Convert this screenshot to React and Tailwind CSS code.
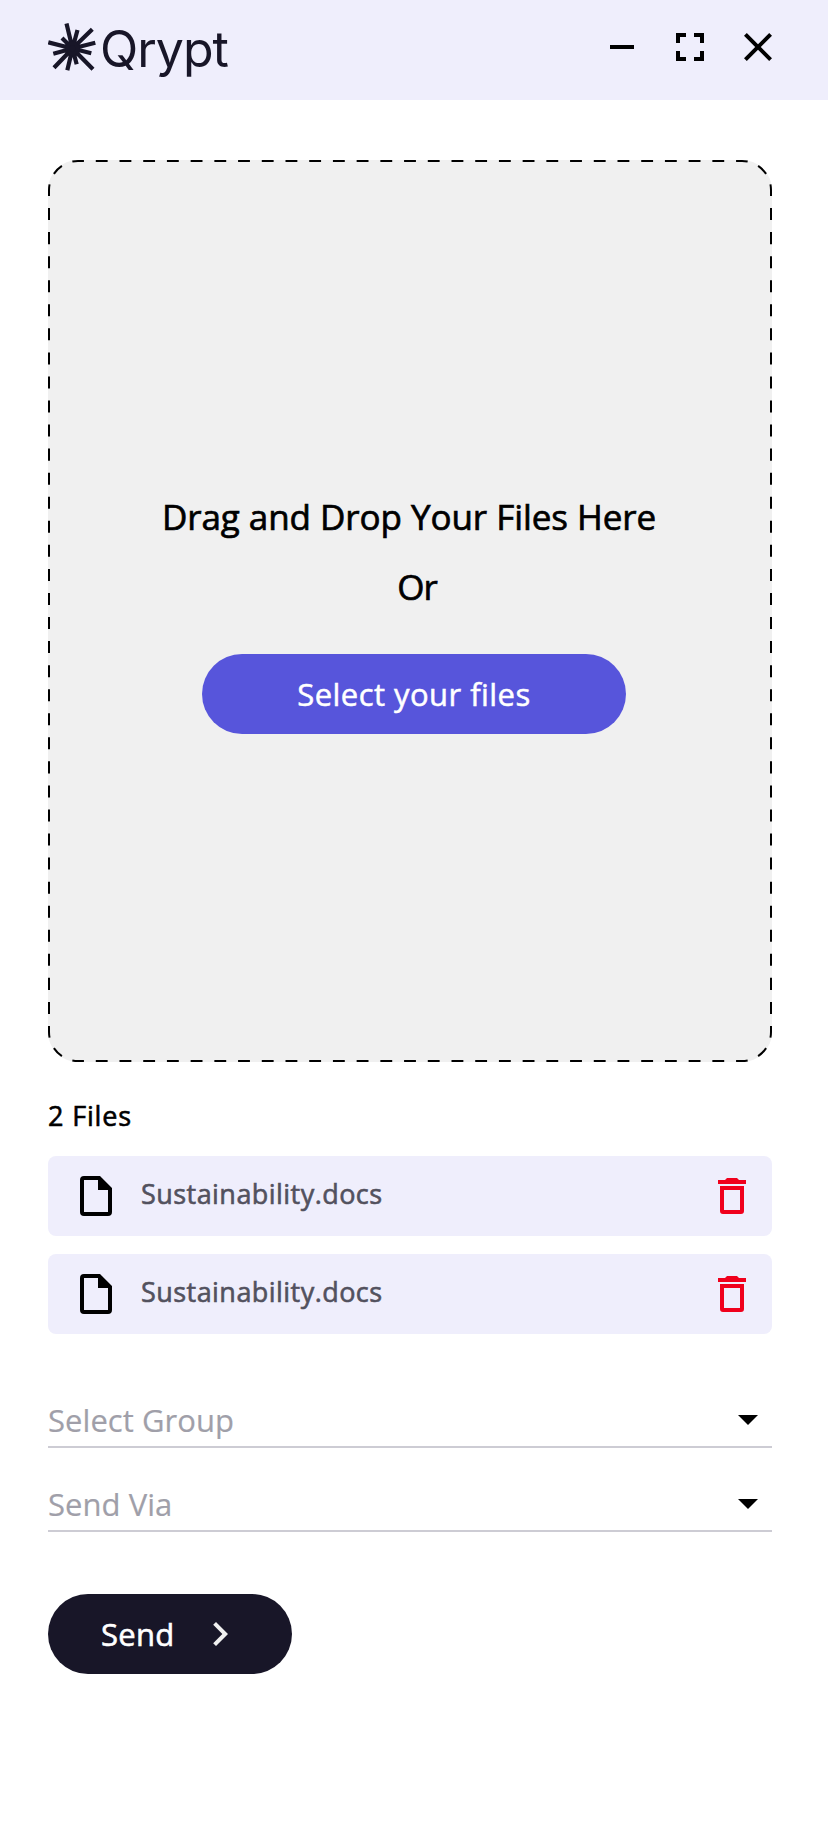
import { useState } from 'react'

function Logo() {
  return (
    <div className="flex items-start text-[#181628]">
      <svg className="h-[50px] w-[48px]" viewBox="0 0 48 50" stroke="currentColor" strokeWidth="4.2">
        <path d="M24.5 25.5 18.5 .5M24.5 25.5 29.5 7M24.5 25.5 44.3 6.3M24.5 25.5 47.3 19.7M24.5 25.5 43.3 30.3M24.5 25.5 45 46.3M24.5 25.5 28.7 41.3M24.5 25.5 19.3 47.3M24.5 25.5 6 44.7M24.5 25.5 5.3 30.7M24.5 25.5 .3 19.3M24.5 25.5 14 15" />
        <circle cx="24.5" cy="25.5" r="5" fill="currentColor" />
      </svg>
      <span className="mt-px ml-[4px] font-['Inter'] text-[50px] leading-[50px] tracking-[-1px]">Qrypt</span>
    </div>
  )
}

function WindowControls() {
  return (
    <div className="flex items-center gap-5">
      <button type="button" aria-label="Minimize">
        <svg className="size-12" viewBox="0 0 24 24">
          <path d="M6 11h12v2H6z" />
        </svg>
      </button>
      <button type="button" aria-label="Fullscreen">
        <svg className="size-12" viewBox="0 0 24 24">
          <path d="M7 14H5v5h5v-2H7v-3zm-2-4h2V7h3V5H5v5zm12 7h-3v2h5v-5h-2v3zM14 5v2h3v3h2V5h-5z" />
        </svg>
      </button>
      <button type="button" aria-label="Close">
        <svg className="size-12" viewBox="0 0 24 24">
          <path d="M19 6.41 17.59 5 12 10.59 6.41 5 5 6.41 10.59 12 5 17.59 6.41 19 12 13.41 17.59 19 19 17.59 13.41 12z" />
        </svg>
      </button>
    </div>
  )
}

// Each side and corner carries a whole number of dash periods, so dashes meet evenly.
function DashedOutline() {
  const sides = [
    { d: 'M30 1H694', length: 672 },
    { d: 'M694 1A29 29 0 0 1 723 30', length: 48 },
    { d: 'M723 30V872', length: 840 },
    { d: 'M723 872A29 29 0 0 1 694 901', length: 48 },
    { d: 'M694 901H30', length: 672 },
    { d: 'M30 901A29 29 0 0 1 1 872', length: 48 },
    { d: 'M1 872V30', length: 840 },
    { d: 'M1 30A29 29 0 0 1 30 1', length: 48 },
  ]
  return (
    <svg className="pointer-events-none absolute inset-0" width="724" height="902" fill="none" stroke="#000" strokeWidth="2">
      {sides.map((s) => (
        <path key={s.d} d={s.d} pathLength={s.length} strokeDasharray="12 12" strokeDashoffset="6" />
      ))}
    </svg>
  )
}

function DropZone() {
  return (
    <section className="relative flex h-[902px] flex-col items-center rounded-[30px] bg-[#f0f0f0] pt-[335px]">
      <DashedOutline />
      <p className="mr-[2px] text-[35px] leading-[44px] tracking-[-0.06px] whitespace-nowrap [-webkit-text-stroke:0.7px]">
        Drag and Drop Your Files Here
      </p>
      <p className="mt-[26px] ml-[14px] text-[35px] leading-[44px] tracking-[-1px] [-webkit-text-stroke:0.7px]">Or</p>
      <button
        type="button"
        className="mt-[45px] ml-2 h-20 w-[424px] rounded-full bg-[#5755db] text-[31px] tracking-[0.45px] text-white [-webkit-text-stroke:0.5px]"
      >
        Select your files
      </button>
    </section>
  )
}

function FileRow({ name, onRemove }) {
  return (
    <li className="flex h-20 items-center rounded-lg bg-[#efeefc] pr-[26px] pl-8">
      <svg className="h-10 w-8" viewBox="0 0 32 40">
        <path
          fillRule="evenodd"
          d="M4 0H20L32 12V36A4 4 0 0 1 28 40H4A4 4 0 0 1 0 36V4A4 4 0 0 1 4 0ZM4 4V36H28V14H18V4Z"
        />
      </svg>
      <span className="ml-[29px] pb-[3px] text-[27px] tracking-[0.45px] text-[#52515e] [-webkit-text-stroke:0.6px]">
        {name}
      </span>
      <button type="button" aria-label={`Remove ${name}`} onClick={onRemove} className="ml-auto">
        <svg className="h-9 w-7" viewBox="0 0 28 36" fill="#f0001c">
          <path d="M0 2H7L9 0H19L21 2H28V6H0Z" />
          <path fillRule="evenodd" d="M2 8H26V33A3 3 0 0 1 23 36H5A3 3 0 0 1 2 33ZM6 12V32H22V12Z" />
        </svg>
      </button>
    </li>
  )
}

function SelectField({ label }) {
  return (
    <button
      type="button"
      className="flex h-12 w-full items-start justify-between border-b-2 border-[#cdccd4] pr-[14px] text-left"
    >
      <span className="text-[31px] leading-[40px] tracking-[0.05px] text-[#a09fa9] [-webkit-text-stroke:0.2px]">
        {label}
      </span>
      <svg className="mt-[15px] h-[10px] w-5" viewBox="0 0 20 10">
        <path d="M0 0H20L10 10Z" />
      </svg>
    </button>
  )
}

export default function App() {
  const [files, setFiles] = useState([
    { id: 1, name: 'Sustainability.docs' },
    { id: 2, name: 'Sustainability.docs' },
  ])

  return (
    <div className="min-h-[1848px] w-[828px] bg-white font-['Open_Sans',sans-serif] text-black">
      <header className="flex h-[100px] items-start justify-between bg-[#efeefc] pt-[23px] pr-[46px] pl-12">
        <Logo />
        <WindowControls />
      </header>
      <main className="px-12 pt-[60px]">
        <div className="w-[724px]">
          <DropZone />
          <h2 className="mt-[36px] text-[27px] leading-[36px] tracking-[0.85px] [-webkit-text-stroke:0.6px]">
            {files.length} Files
          </h2>
          <ul className="mt-[22px] flex flex-col gap-[18px]">
            {files.map((f) => (
              <FileRow key={f.id} name={f.name} onRemove={() => setFiles(files.filter((x) => x.id !== f.id))} />
            ))}
          </ul>
          <div className="mt-[66px] flex flex-col gap-9">
            <SelectField label="Select Group" />
            <SelectField label="Send Via" />
          </div>
          <button
            type="button"
            className="mt-[62px] flex h-20 w-[244px] items-center rounded-full bg-[#181628] pl-[53px] text-[31px] text-white"
          >
            <span className="w-[95px] text-left tracking-[0.3px] [-webkit-text-stroke:0.6px]">Send</span>
            <svg className="size-12" viewBox="0 0 24 24" fill="#f0f0f0">
              <path d="M10 6 8.59 7.41 13.17 12l-4.58 4.59L10 18l6-6z" />
            </svg>
          </button>
        </div>
      </main>
    </div>
  )
}
